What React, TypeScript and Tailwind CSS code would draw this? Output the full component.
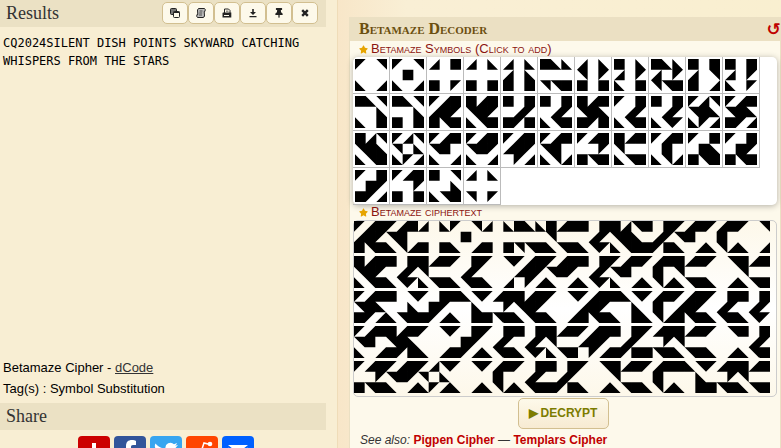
import { useState } from 'react';
import type { ReactNode } from 'react';
import { FaThumbtack, FaStar } from 'react-icons/fa';

// Each glyph is a 3x3 grid read row by row: '.' empty, '#' filled,
// a/b/c/d = triangle in the top-left / top-right / bottom-left / bottom-right corner.
const GLYPHS: Record<string, string> = {
  ' ': 'a.b...c.d',
  '0': 'a.b.#.c.d',
  '1': 'd.#...#.a',
  '2': 'd.c...#.#',
  '3': 'd.cd.c#.#',
  '4': '#cc...bb#',
  '5': 'd.cb.a#.#',
  '6': '#.cd.ac.#',
  '7': '#ccd.abb#',
  '8': '#.#d.b#.d',
  '9': '#.#d.ac.a',
  A: '#cb..cc.#',
  B: '#cb..c#.#',
  C: 'ad#d#a#b#',
  D: '#d#b#acb#',
  E: '#.#.da#a#',
  F: '#.#.dacb#',
  G: '#d#b#c#a#',
  H: 'a.#.dacb#',
  I: '#.#.dacba',
  J: 'adbb#ccad',
  K: 'ad#b#c#ad',
  L: '#dbb#ccb#',
  M: 'adbb.ccad',
  N: 'ad#b#.c.d',
  O: 'ad#b#ac.d',
  P: 'ad#d#a.ad',
  Q: 'ad#b#.cbd',
  R: 'ad#..a#b#',
  S: '#d#b..cb#',
  T: 'ad#.#.cbd',
  U: 'a.#.#c#b#',
  V: 'a.#.#a#b#',
  W: 'a.#.#a#ad',
  X: 'ad#..a#.#',
  Y: '#.b..ccb#',
  Z: 'd.c...b.a',
};

const SYMBOLS = ' 0123456789ABCDEFGHIJKLMNOPQRSTUVWXYZ'.split('');
const MESSAGE = 'CQ2024SILENT DISH POINTS SKYWARD CATCHING WHISPERS FROM THE STARS';

const SHAPES: Record<string, string> = {
  '#': 'h1v1h-1z',
  a: 'h1l-1 1z',
  b: 'h1v1z',
  c: 'l1 1h-1z',
};

function Glyph({ char }: { char: string }) {
  const path = GLYPHS[char]
    .split('')
    .map((cell, i) => {
      const x = i % 3;
      const y = Math.floor(i / 3);
      if (cell === '.') return '';
      if (cell === 'd') return `M${x + 1} ${y}v1h-1z`;
      return `M${x} ${y}${SHAPES[cell]}`;
    })
    .join('');
  return (
    <svg viewBox="0 0 3 3" className="block size-8 shrink-0" aria-hidden="true">
      <path d={path} />
    </svg>
  );
}

function ToolIcon({ children }: { children: ReactNode }) {
  return (
    <svg viewBox="0 0 10 10" className="size-[10px] fill-current" aria-hidden="true">
      {children}
    </svg>
  );
}

const TOOLS: { label: string; icon: ReactNode }[] = [
  {
    label: 'Copy',
    icon: (
      <ToolIcon>
        <rect x="0.500" y="0.500" width="6" height="6" rx="1" fill="#777" stroke="currentColor" />
        <rect x="3.500" y="3.500" width="6" height="6" rx="1" fill="#fdf9ea" stroke="currentColor" />
        <path d="M3.500 3.500h6v1.500h-6z" />
      </ToolIcon>
    ),
  },
  {
    label: 'Copy as text',
    icon: (
      <ToolIcon>
        <path d="M2.500.5h6q1.500 1 .3 3H8.200L8.500 8Q8 9.500 7 9.500H1.500Q.2 8.500 1 6.500h.8L1.500 2z" fill="#bbb" stroke="currentColor" />
        <path d="M3.500 3h3M3.200 5h3M3 7h3" fill="none" stroke="currentColor" strokeWidth="0.700" />
      </ToolIcon>
    ),
  },
  {
    label: 'Print',
    icon: (
      <ToolIcon>
        <path d="M2.500 5V1h4L8 2.500V5" fill="none" stroke="currentColor" />
        <path d="M4 2.800h2.500v.8H4zM1 4.500h8.300V9.500H.5V5zM2 7v1h5V7z" fillRule="evenodd" />
      </ToolIcon>
    ),
  },
  {
    label: 'Download',
    icon: (
      <ToolIcon>
        <path d="M4.200 1h1.600v3H8L5 7 2 4h2.200zM1.500 8h7v1.300h-7z" />
      </ToolIcon>
    ),
  },
  { label: 'Pin', icon: <FaThumbtack /> },
  {
    label: 'Close',
    icon: (
      <ToolIcon>
        <path d="M2.200 2.200l5.600 5.600M7.800 2.200L2.200 7.800" fill="none" stroke="currentColor" strokeWidth="2.400" />
      </ToolIcon>
    ),
  },
];

const SHARES: { label: string; color: string; icon: ReactNode }[] = [
  { label: 'Share', color: 'bg-[#cc0000]', icon: <path d="M14 7h4v7h7v4h-7v7h-4v-7H7v-4h7z" /> },
  {
    label: 'Facebook',
    color: 'bg-[#32549a]',
    icon: <path d="M22 5v4h-3c-1.500 0-2 .7-2 2v3h5l-.7 5H17v13h-5V19H8v-5h4v-4c0-4 2-6 6-6 1.600 0 3 .1 4 1z" />,
  },
  {
    label: 'Twitter',
    color: 'bg-[#38a5f0]',
    icon: <path d="M28 9l-3 .8c1-.6 1.700-1.600 2-2.700l-3 1.200a5 5 0 0 0-8.500 4.400C11.500 12.500 8 10.500 5.500 7.500c-1.300 2.300-.7 5 1.500 6.500l-2.200-.6c0 2.300 1.600 4.400 3.900 4.900l-2.100.1c.6 1.900 2.300 3.200 4.500 3.300A10 10 0 0 1 4 23.500C14 29.500 25.500 23 25.500 12z" />,
  },
  {
    label: 'Reddit',
    color: 'bg-[#ff4500]',
    icon: (
      <>
        <path d="M16 13l2-6 5 1.200" fill="none" stroke="white" strokeWidth="1.500" />
        <circle cx="24" cy="8" r="2.300" />
        <ellipse cx="16" cy="19" rx="9" ry="7" />
      </>
    ),
  },
  {
    label: 'Email',
    color: 'bg-[#0060ff]',
    icon: <path d="M6 9h20l-10 8zM6 11.500l10 8 10-8V23H6z" />,
  },
];

function FieldLabel({ children, htmlFor }: { children: ReactNode; htmlFor: string }) {
  return (
    <label
      htmlFor={htmlFor}
      className="flex h-[15px] items-start gap-[3px] pl-[6px] text-[13px] leading-[13px] text-[#8b1410] [font-variant:small-caps]"
    >
      <FaStar className="mt-[3px] size-[9px] text-[#e6a400]" aria-hidden="true" />
      {children}
    </label>
  );
}

function Sidebar() {
  return (
    <aside className="w-[338px] shrink-0 border-r border-[#efdcb8] bg-[#f8eed3] pr-[11px]">
      <header className="flex h-[27px] items-center justify-between bg-[#ebe1c4] pr-2 pb-px pl-[6px]">
        <h2 className="font-['Liberation_Serif',serif] text-[18px] leading-6 text-[#333]">Results</h2>
        <div className="flex">
          {TOOLS.map((tool) => (
            <button
              key={tool.label}
              type="button"
              aria-label={tool.label}
              className="flex h-[22px] w-[26px] items-center justify-center rounded-[5px] border border-[#d2bf90] bg-[#fdf9ea] text-[10px] text-[#222]"
            >
              {tool.icon}
            </button>
          ))}
        </div>
      </header>
      <output className="block min-h-[330px] pt-[7px] pl-[3px] font-['DejaVu_Sans_Mono',monospace] text-[12px] leading-[18px] text-black">
        {MESSAGE}
      </output>
      <div className="pb-1 pl-[3px] text-[13px] leading-[21px] text-black">
        <p>
          Betamaze Cipher -{' '}
          <a href="#dcode" className="text-[#333] underline">
            dCode
          </a>
        </p>
        <p>Tag(s) : Symbol Substitution</p>
      </div>
      <h2 className="h-[27px] bg-[#ebe1c4] pl-[6px] font-['Liberation_Serif',serif] text-[18px] leading-[26px] text-[#333]">Share</h2>
      <div className="flex justify-center gap-1 pt-[6px] pl-[6px]">
        {SHARES.map((share) => (
          <a key={share.label} href="#share" aria-label={share.label} className={`block size-8 rounded ${share.color}`}>
            <svg viewBox="0 0 32 32" className="size-8 fill-white" aria-hidden="true">
              {share.icon}
            </svg>
          </a>
        ))}
      </div>
    </aside>
  );
}

function Decoder() {
  const [cipher, setCipher] = useState(MESSAGE);
  return (
    <main className="mt-[17px] min-w-0 flex-1 border-l border-[#ebe0c3] bg-[#fdf9eb]">
      <header className="flex h-6 items-center justify-between bg-[#ebe0c3] pl-[9px]">
        <h1 className="font-['Liberation_Serif',serif] text-[16px] leading-6 font-bold text-[#6b4f10] [font-variant:small-caps]">Betamaze Decoder</h1>
        <button
          type="button"
          aria-label="Reset"
          onClick={() => setCipher('')}
          className="pb-px font-['DejaVu_Sans',sans-serif] text-[17px] leading-5 font-bold text-[#c00000]"
        >
          ↺
        </button>
      </header>
      <div className="border-r border-[#ebe0c3] pt-px pr-[3px] pl-[3px]">
        <FieldLabel htmlFor="symbols">Betamaze Symbols (Click to add)</FieldLabel>
        <div id="symbols" className="flex flex-wrap rounded-[5px] bg-white shadow-[0_1px_6px_rgba(0,0,0,0.3)]">
          {SYMBOLS.map((char) => (
            <button
              key={char}
              type="button"
              aria-label={char === ' ' ? 'Space' : char}
              onClick={() => setCipher(cipher + char)}
              className="border-r border-b border-[#bbb] p-[2px]"
            >
              <Glyph char={char} />
            </button>
          ))}
        </div>
        <FieldLabel htmlFor="ciphertext">Betamaze ciphertext</FieldLabel>
        <div
          id="ciphertext"
          className="flex min-h-[177px] flex-wrap content-start gap-y-[3px] rounded-[5px] border border-[#ccc] bg-linear-to-b from-[#fdf8ea] via-white to-[#fdf8ea]"
        >
          {cipher.split('').map((char, i) => (
            <Glyph key={i} char={char} />
          ))}
        </div>
      </div>
      <div className="flex justify-center border-r border-[#ebe0c3] pt-px pr-1">
        <button
          type="button"
          className="flex h-[31px] w-[91px] items-center justify-center gap-[3px] rounded-[5px] border border-[#d2bf90] bg-linear-to-b from-[#fdf9ea] to-[#f7ebd2] pb-px text-[12px] font-bold text-[#7c7c00]"
        >
          <span>▶</span>
          DECRYPT
        </button>
      </div>
      <p className="border-r border-[#ebe0c3] pt-[3px] pb-2 pl-[10px] text-[12px] leading-4 text-[#333]">
        <em>See also:</em>{' '}
        <a href="#pigpen" className="font-bold text-[#c00000]">
          Pigpen Cipher
        </a>{' '}
        —{' '}
        <a href="#templars" className="font-bold text-[#c00000]">
          Templars Cipher
        </a>
      </p>
    </main>
  );
}

export default function App() {
  return (
    <div className="flex h-screen overflow-hidden bg-linear-to-r from-[#f8e6c8] from-43% via-[#f9efd5] via-52% to-[#f9efd0] font-['Liberation_Sans',Arial,sans-serif]">
      <Sidebar />
      <div className="flex min-w-0 flex-1 pl-[11px]">
        <Decoder />
      </div>
    </div>
  );
}
